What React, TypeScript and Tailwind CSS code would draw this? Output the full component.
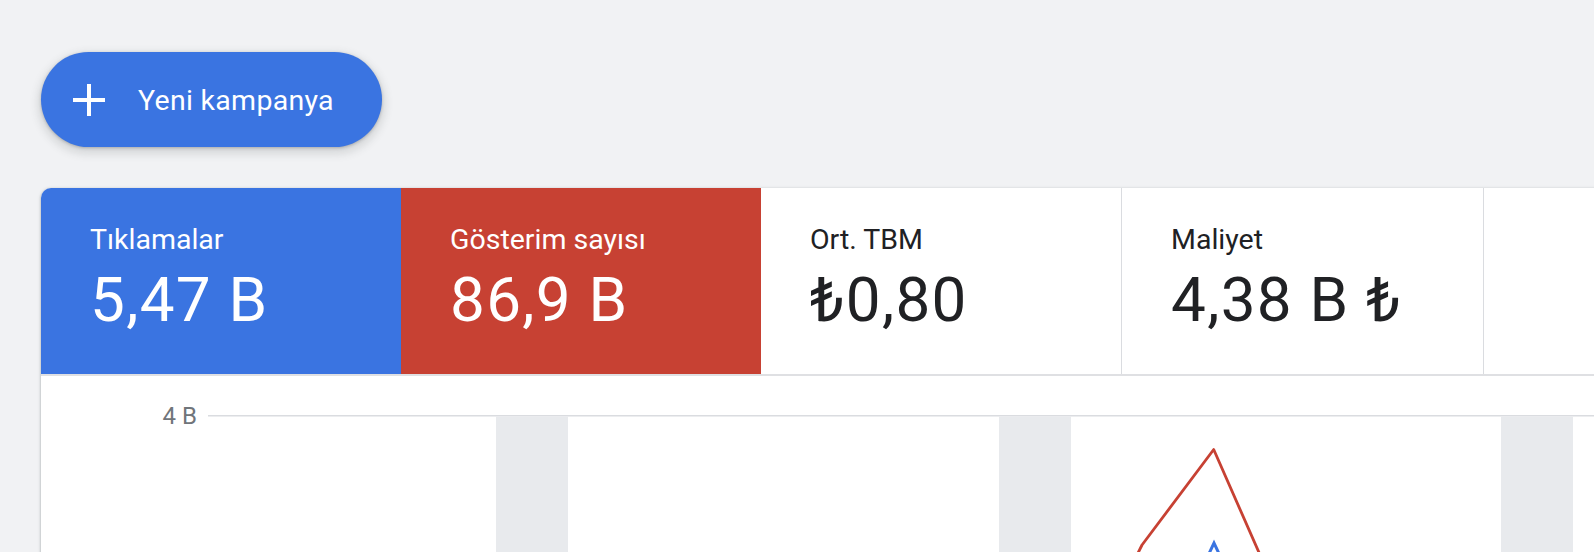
import { ReactNode } from 'react'

type Metric = {
    label: string
    value: string
    tone: 'blue' | 'red' | 'plain' | 'last'
}

const metrics: Metric[] = [
    { label: 'Tıklamalar', value: '5,47 B', tone: 'blue' },
    { label: 'Gösterim sayısı', value: '86,9 B', tone: 'red' },
    { label: 'Ort. TBM', value: '₺0,80', tone: 'plain' },
    { label: 'Maliyet', value: '4,38 B ₺', tone: 'last' },
    { label: '', value: '', tone: 'plain' },
]

const toneClass = {
    blue: 'bg-[#3a74e1] text-white w-[360px]',
    red: 'bg-[#c74133] text-white w-[360px]',
    plain: 'bg-white text-[#202124] w-[361px] border-r border-[#dadce0]',
    last: 'bg-white text-[#202124] w-[362px] border-r border-[#dadce0]',
}

const PlusIcon = () => (
    <svg width="32" height="32" viewBox="0 0 32 32" fill="white">
        <rect x="14" y="0" width="4" height="32" />
        <rect x="0" y="14" width="32" height="4" />
    </svg>
)

const Tile = ({ metric }: { metric: Metric }): ReactNode => (
    <div className={`shrink-0 h-[186px] pt-[34px] pl-[49px] ${toneClass[metric.tone]}`}>
        <div className="text-[28.5px] leading-[36px] h-[36px]">{metric.label}</div>
        <div className="mt-[6px] text-[62px] leading-[72px] tracking-[1.3px]">{metric.value}</div>
    </div>
)

// chart drawing, origin sits on the 4 B grid line
const Plot = () => (
    <svg width="1600" height="200" className="block">
        <rect x="0" y="0" width="1600" height="1.5" fill="#dadce0" />
        {[288, 791, 1293].map((x) => (
            <rect key={x} x={x} y="1.5" width="72" height="200" fill="#e8eaed" />
        ))}
        <polyline
            points="926,160 930,138 934,130 1005.7,34.5 1060,158"
            fill="none"
            stroke="#c74133"
            strokeWidth="2.8"
            strokeLinejoin="round"
        />
        <polyline
            points="998,145 1006,128 1014,145"
            fill="none"
            stroke="#3a74e1"
            strokeWidth="3"
        />
    </svg>
)

export default function App() {
    return (
        <div className="h-[552px] w-full overflow-hidden bg-[#f1f2f4] font-['Roboto',sans-serif]">
            <div className="pl-[41px] pt-[52px]">
                <button className="flex items-center h-[95px] w-[341px] pl-[32px] rounded-full bg-[#3a74e1] text-white shadow-[0_1px_3px_rgba(60,64,67,0.3),0_4px_8px_3px_rgba(60,64,67,0.15)]">
                    <PlusIcon />
                    <span className="ml-[33px] mt-[3px] text-[28.5px] font-[450] tracking-[0.3px]">Yeni kampanya</span>
                </button>

                <div className="mt-[41px] w-[2000px] bg-white rounded-tl-[10px] overflow-hidden shadow-[0_1px_2px_rgba(60,64,67,0.3),0_1px_3px_1px_rgba(60,64,67,0.15)]">
                    <div className="flex border-b-2 border-[#dfe0e3]">
                        {metrics.map((m, i) => (
                            <Tile key={i} metric={m} />
                        ))}
                    </div>
                    <div className="flex pt-[39px] h-[200px]">
                        <div className="w-[156px] shrink-0 text-right text-[24px] leading-[24px] -mt-[11px] text-[#70757a]">4 B</div>
                        <div className="ml-[11px]">
                            <Plot />
                        </div>
                    </div>
                </div>
            </div>
        </div>
    )
}
